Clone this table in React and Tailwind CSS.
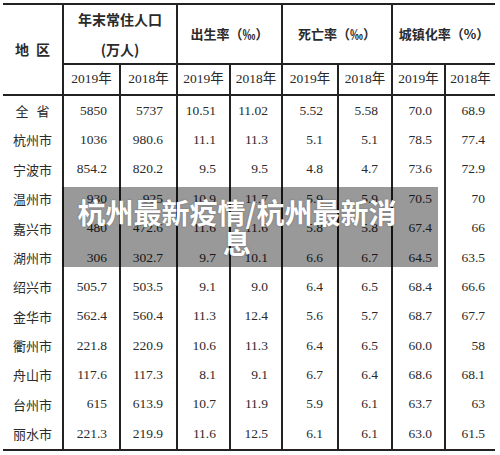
import React from "react";

// column grid shared by header and body rows
const cols = "grid grid-cols-[59px_57px_57px_53px_52px_56px_54px_53px_51px]";

const rows = [
    ["全省", "5850", "5737", "10.51", "11.02", "5.52", "5.58", "70.0", "68.9"],
    ["杭州市", "1036", "980.6", "11.1", "11.3", "5.1", "5.1", "78.5", "77.4"],
    ["宁波市", "854.2", "820.2", "9.5", "9.5", "4.8", "4.7", "73.6", "72.9"],
    ["温州市", "930", "925", "10.9", "11.7", "5.9", "5.9", "70.5", "70"],
    ["嘉兴市", "480", "472.6", "11.6", "11.6", "5.8", "5.8", "67.4", "66"],
    ["湖州市", "306", "302.7", "9.7", "10.1", "6.6", "6.7", "64.5", "63.5"],
    ["绍兴市", "505.7", "503.5", "9.1", "9.0", "6.4", "6.5", "68.4", "66.6"],
    ["金华市", "562.4", "560.4", "11.3", "12.4", "5.6", "5.7", "68.7", "67.7"],
    ["衢州市", "221.8", "220.9", "10.6", "11.3", "6.4", "6.5", "60.0", "58"],
    ["舟山市", "117.6", "117.3", "8.1", "9.1", "6.7", "6.4", "68.6", "68.1"],
    ["台州市", "615", "613.9", "10.7", "11.9", "5.9", "6.1", "63.7", "63"],
    ["丽水市", "221.3", "219.9", "11.6", "12.5", "6.1", "6.1", "63.0", "61.5"],
];

// right padding of each number column, read off the screenshot
const pad = ["", "pr-[12px]", "pr-[13px]", "pr-[13px]", "pr-[13px]", "pr-[14px]", "pr-[13px]", "pr-[12px]", "pr-[10px]"];

const cjk = "font-['Noto_Sans_CJK_SC',sans-serif]";
const num = "font-['Liberation_Serif','Noto_Sans_CJK_SC',serif]";

function YearCell({year}) {
    return (
        <div className={`border-l-2 border-[#222] flex items-center justify-center text-[13.5px] ${num}`}>
            {year}年
        </div>
    );
}

function GroupCell({children}) {
    return (
        <div className="col-span-2 border-l-2 border-b-2 border-[#222] flex items-center justify-center text-[13px] font-bold">
            {children}
        </div>
    );
}

export default function App() {
    return (
        <div className="w-[500px] h-[455px] bg-white relative overflow-hidden text-[#2a2a2a]">
            <div className="ml-[3px] mt-[3px] w-[492px] border-t-2 border-b-2 border-[#222]">
                {/* header */}
                <div className={`${cols} grid-rows-[60px_29px] border-b-2 border-[#222] ${cjk}`}>
                    <div className="row-span-2 flex items-center justify-center gap-[7px] text-[14px] font-bold">
                        <span>地</span>
                        <span>区</span>
                    </div>
                    <div className="col-span-2 border-l-2 border-b-2 border-[#222] flex flex-col items-center justify-center text-[14px] font-bold leading-[30px]">
                        <span>年末常住人口</span>
                        <span>(万人)</span>
                    </div>
                    <GroupCell>出生率（‰）</GroupCell>
                    <GroupCell>死亡率（‰）</GroupCell>
                    <GroupCell>城镇化率（%）</GroupCell>
                    <YearCell year="2019" />
                    <YearCell year="2018" />
                    <YearCell year="2019" />
                    <YearCell year="2018" />
                    <YearCell year="2019" />
                    <YearCell year="2018" />
                    <YearCell year="2019" />
                    <YearCell year="2018" />
                </div>

                {/* body */}
                {rows.map((row, i) => (
                    <div key={i} className={`${cols} h-[29.4px]`}>
                        {row.map((cell, j) =>
                            j === 0 ? (
                                <div key={j} className={`flex items-center justify-center text-[13px] ${cjk} ${i === 0 ? "gap-[8px]" : ""}`}>
                                    {i === 0 ? (
                                        <>
                                            <span>全</span>
                                            <span>省</span>
                                        </>
                                    ) : cell}
                                </div>
                            ) : (
                                <div key={j} className={`border-l-2 border-[#222] flex items-center justify-end text-[13.5px] ${num} ${pad[j]}`}>
                                    {cell}
                                </div>
                            )
                        )}
                    </div>
                ))}
            </div>

            {/* title overlay */}
            <div className="absolute left-[62px] top-[187px] w-[376px] h-[80px] bg-black/40 pl-[14px] pr-[40px] py-[10px]">
                <p className={`text-white font-bold text-[28px] leading-[30px] text-center [text-shadow:0_0_2px_rgba(0,0,0,0.35)] ${cjk}`}>
                    杭州最新疫情/杭州最新消息
                </p>
            </div>
        </div>
    );
}
